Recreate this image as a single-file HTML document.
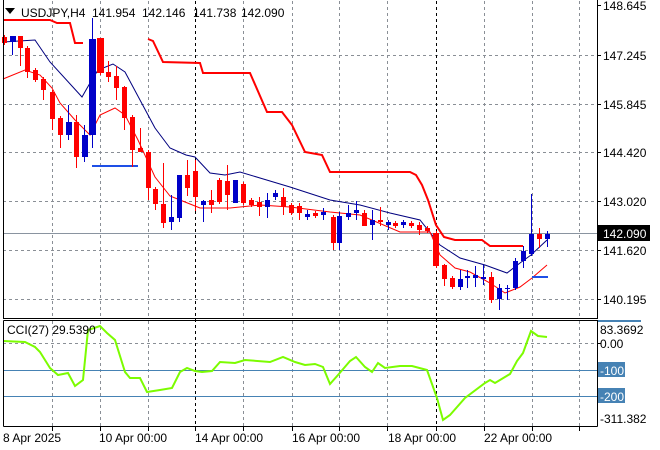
<!DOCTYPE html>
<html><head><meta charset="utf-8"><style>
body{margin:0;background:#fff;}
svg{display:block;font-family:"Liberation Sans",sans-serif;}
</style></head><body>
<svg width="660" height="450" viewBox="0 0 660 450" xmlns="http://www.w3.org/2000/svg">
<rect width="660" height="450" fill="#fff"/>
<g stroke="#8a8f96" stroke-dasharray="3,3" stroke-width="1">
<path d="M52.5 1V318M100.5 1V318M148.5 1V318M243.5 1V318M292.5 1V318M339.5 1V318M387.5 1V318M484.5 1V318M532.5 1V318M579.5 1V318"/>
<path d="M52.5 321V426M100.5 321V426M148.5 321V426M243.5 321V426M292.5 321V426M339.5 321V426M387.5 321V426M484.5 321V426M532.5 321V426M579.5 321V426"/>
<path d="M3 55.5H597M3 104.5H597M3 152.5H597M3 201.5H597M3 250.5H597M3 299.5H597M3 343.5H597"/>
</g>
<g stroke="#000" stroke-dasharray="3,3"><path d="M195.5 1V426M436.5 1V426"/></g>
<path d="M3 233.5H597" stroke="#8a94a0"/>
<path d="M3 370.5H597M3 396.5H597" stroke="#4682b4"/>
<polyline fill="none" stroke="#f00" stroke-width="2" points="3,20 50,20 57,23 70,23 75,43 83,43"/>
<polyline fill="none" stroke="#f00" stroke-width="2" points="148,39 153,41 163,62 200,63 203,73 250,73 267,112 282,112 292,125 305,152 322,155 330,172 410,172 416,175 422,185 428,200 436,225 444,237 455,240 482,240 490,246 523,246"/>
<polyline fill="none" stroke="#00007f" stroke-width="1" points="3,42 35,40 50,62 82,97 90,83 98,70 113,64 125,72 140,100 155,128 170,148 186,155 195,157 210,173 225,175 240,172 260,178 290,187 330,200 360,205 390,213 420,220 440,245 460,258 485,265 507,273 520,263 531,255 547,240"/>
<polyline fill="none" stroke="#f00" stroke-width="1" points="3,79 25,70 40,75 52,88 60,103 75,120 90,135 100,115 115,108 125,115 138,140 155,177 170,196 185,202 200,208 230,208 260,205 290,207 330,212 360,215 400,232 430,232 440,255 455,268 470,272 490,283 505,293 520,287 532,278 547,265"/>
<path d="M92 166H138M532 277H548" stroke="#1e4fe6" stroke-width="2"/>
<g>
<path stroke="#0000c8" d="M12.5 36V55M68.5 105V140M84.5 125V162M92.5 18V148M171.5 195V230M179.5 175V222M203.5 200V222M235.5 180V203M267.5 193V218M275.5 190V200M307.5 210V220M323.5 208V220M339.5 212V250M348.5 205V220M356.5 201V220M372.5 210V240M388.5 220V230M403.5 220V228M460.5 270V290M467.5 270V288M475.5 266V287M483.5 265V285M499.5 284V310M507.5 285V300M515.5 258V290M523.5 246V268M531.5 194V256M547.5 231V247"/>
<path stroke="#f00" d="M4.5 35V45M20.5 36V66M27.5 46V78M35.5 68V82M43.5 77V100M52.5 90V130M60.5 116V148M76.5 115V168M100.5 38V75M108.5 61V82M116.5 66V100M124.5 86V130M132.5 115V167M140.5 128V152M148.5 150V200M155.5 187V210M163.5 163V228M187.5 160V196M195.5 160V211M211.5 190V213M219.5 178V204M227.5 165V210M243.5 182V205M251.5 198V207M259.5 197V216M283.5 188V215M291.5 203V215M299.5 203V220M315.5 211V218M333.5 215V250M364.5 210V226M380.5 207V226M395.5 221V228M411.5 221V228M419.5 222V235M427.5 226V233M436.5 231V268M444.5 264V286M452.5 276V289M491.5 272V303M539.5 228V248"/>
<g fill="#0000c8">
<rect x="10" y="36" width="6" height="6"/><rect x="66" y="122" width="6" height="13"/><rect x="82" y="135" width="6" height="22"/><rect x="89" y="39" width="7" height="96"/><rect x="169" y="217" width="5" height="5"/><rect x="177" y="175" width="5" height="43"/><rect x="201" y="201" width="5" height="4"/><rect x="233" y="180" width="5" height="23"/><rect x="265" y="200" width="5" height="7"/><rect x="273" y="193" width="5" height="4"/><rect x="305" y="214" width="5" height="3"/><rect x="321" y="212" width="5" height="3"/><rect x="337" y="216" width="5" height="27"/><rect x="346" y="213" width="5" height="4"/><rect x="354" y="210" width="5" height="3"/><rect x="370" y="220" width="5" height="5"/><rect x="386" y="222" width="5" height="3"/><rect x="401" y="222" width="5" height="3"/><rect x="458" y="279" width="5" height="8"/><rect x="465" y="276" width="5" height="2"/><rect x="473" y="275" width="5" height="3"/><rect x="481" y="277" width="5" height="2"/><rect x="497" y="288" width="5" height="11"/><rect x="505" y="288" width="5" height="1"/><rect x="513" y="261" width="5" height="27"/><rect x="521" y="251" width="5" height="10"/><rect x="529" y="234" width="5" height="20"/><rect x="545" y="234" width="5" height="5"/>
</g>
<g fill="#f00">
<rect x="2" y="37" width="5" height="6"/><rect x="18" y="36" width="5" height="12"/><rect x="25" y="48" width="5" height="24"/><rect x="33" y="70" width="5" height="10"/><rect x="41" y="79" width="5" height="11"/><rect x="50" y="92" width="5" height="27"/><rect x="58" y="118" width="5" height="17"/><rect x="74" y="122" width="5" height="35"/><rect x="97" y="38" width="7" height="35"/><rect x="106" y="72" width="5" height="5"/><rect x="114" y="76" width="5" height="12"/><rect x="122" y="87" width="5" height="31"/><rect x="130" y="117" width="5" height="33"/><rect x="138" y="148" width="5" height="4"/><rect x="146" y="152" width="5" height="36"/><rect x="153" y="189" width="5" height="15"/><rect x="161" y="204" width="5" height="19"/><rect x="185" y="175" width="5" height="13"/><rect x="193" y="171" width="5" height="26"/><rect x="209" y="200" width="5" height="5"/><rect x="217" y="180" width="5" height="22"/><rect x="225" y="181" width="5" height="14"/><rect x="241" y="184" width="5" height="19"/><rect x="249" y="200" width="5" height="5"/><rect x="257" y="202" width="5" height="5"/><rect x="281" y="197" width="5" height="10"/><rect x="289" y="205" width="5" height="8"/><rect x="297" y="206" width="5" height="7"/><rect x="313" y="213" width="5" height="3"/><rect x="331" y="217" width="5" height="26"/><rect x="362" y="213" width="5" height="13"/><rect x="378" y="220" width="5" height="2"/><rect x="393" y="223" width="5" height="3"/><rect x="409" y="223" width="5" height="3"/><rect x="417" y="225" width="5" height="5"/><rect x="425" y="228" width="5" height="3"/><rect x="433" y="233" width="6" height="33"/><rect x="442" y="265" width="5" height="14"/><rect x="450" y="278" width="5" height="9"/><rect x="489" y="277" width="5" height="23"/><rect x="537" y="234" width="5" height="5"/>
</g>
</g>
<polyline fill="none" stroke="#7cfc00" stroke-width="2" points="3,341 25,342 35,347 40,352 50,368 58,375 68,373 75,386 83,380 88,330 100,326 107,333 115,340 125,372 130,378 140,378 147,392 160,390 172,388 180,372 187,368 195,371 202,372 212,371 220,362 235,363 245,360 270,362 283,357 295,362 305,365 315,364 323,367 330,384 338,375 350,361 356,357 365,367 372,372 378,363 385,368 400,366 412,366 427,370 437,398 443,420 450,415 465,398 485,383 490,380 495,383 510,374 517,361 523,353 531,331 538,336 547,337"/>
<path d="M3.5 0V318.5H597.5V0M3.5 320.5H597.5V426.5M3.5 320.5V426.5" fill="none" stroke="#000"/>
<path d="M3.5 426.5H597.5" stroke="#000"/>
<path d="M52.5 427V431M148.5 427V431M243.5 427V431M339.5 427V431M436.5 427V431M532.5 427V431M100.5 427V431M195.5 427V431M292.5 427V431M387.5 427V431M484.5 427V431M579.5 427V431" stroke="#000"/>
<path d="M597 5.5H601M597 55.5H601M597 104.5H601M597 152.5H601M597 201.5H601M597 250.5H601M597 299.5H601M597 343.5H601" stroke="#000"/>
<g font-size="12" fill="#000">
<path d="M5 8H15L10 14Z" fill="#000"/>
<text x="21" y="17">USDJPY,H4</text>
<text x="92" y="17">141.954</text>
<text x="142" y="17">142.146</text>
<text x="193" y="17">141.738</text>
<text x="241" y="17">142.090</text>
<text x="7" y="334">CCI(27) 29.5390</text>
<text x="603" y="10">148.645</text>
<text x="603" y="60">147.245</text>
<text x="603" y="109">145.845</text>
<text x="603" y="157">144.420</text>
<text x="603" y="206">143.020</text>
<text x="603" y="255">141.620</text>
<text x="603" y="304">140.195</text>
<rect x="598" y="225" width="52" height="16" fill="#000"/>
<text x="603" y="238" fill="#fff">142.090</text>
<rect x="598" y="320" width="43" height="2" fill="#4682b4"/>
<text x="600" y="334">83.3692</text>
<text x="600" y="348">0.00</text>
<rect x="598" y="362" width="27" height="15" fill="#4682b4"/>
<text x="600" y="375" fill="#fff">-100</text>
<rect x="598" y="388" width="27" height="15" fill="#4682b4"/>
<text x="600" y="401" fill="#fff">-200</text>
<text x="600" y="423">-311.382</text>
<text x="3" y="442">8 Apr 2025</text>
<text x="99" y="442">10 Apr 00:00</text>
<text x="195" y="442">14 Apr 00:00</text>
<text x="292" y="442">16 Apr 00:00</text>
<text x="388" y="442">18 Apr 00:00</text>
<text x="484" y="442">22 Apr 00:00</text>
</g>
</svg>
</body></html>
